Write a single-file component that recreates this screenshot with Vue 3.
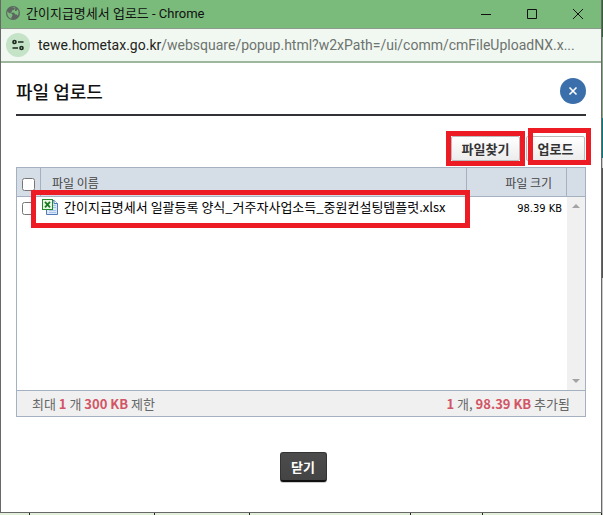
<template>
  <div class="desktop">
    <main class="window">
      <header class="titlebar">
        <svg class="globe" viewBox="0 0 14 14" aria-hidden="true">
          <circle cx="7" cy="7" r="7" fill="#5d6661" />
          <path d="M1.2 5.4 3.4 7.2H5.2L6.4 8.6V10L5.4 11.2V12.8C3 12 1.2 9.8 1.2 7ZM5.4 1.4 8.8 1.3V2.8L7.4 4.2H6V5.8H4.6V6.6L8.2 6.8 9.2 8.4H10.8L11.6 9.8C13.1 7.8 12.9 5 11.6 3.3L10.4 5H9V3.8L9.4 2" fill="#7abb7b" />
        </svg>
        <span class="window-title">간이지급명세서 업로드 - Chrome</span>
        <div class="window-controls">
          <button type="button" aria-label="최소화">
            <svg viewBox="0 0 12 12"><path d="M1 6.5H11" /></svg>
          </button>
          <button type="button" aria-label="최대화">
            <svg viewBox="0 0 12 12"><path d="M1.5 1.5H10.5V10.5H1.5Z" /></svg>
          </button>
          <button type="button" aria-label="창 닫기">
            <svg viewBox="0 0 12 12"><path d="M1 1 11 11M11 1 1 11" /></svg>
          </button>
        </div>
      </header>

      <div class="addressbar">
        <button type="button" class="site-info" aria-label="사이트 정보">
          <svg viewBox="0 0 14 14">
            <circle cx="3.5" cy="4" r="1.5" />
            <path d="M7 4H12.5M1.5 10H7" />
            <circle cx="10.5" cy="10" r="1.5" />
          </svg>
        </button>
        <div class="url"><span class="host">tewe.hometax.go.kr</span>/websquare/popup.html?w2xPath=/ui/comm/cmFileUploadNX.x...</div>
      </div>

      <section class="popup">
        <div class="popup-head">
          <h1>파일 업로드</h1>
          <button type="button" class="popup-close" aria-label="닫기">
            <svg viewBox="0 0 10 10"><path d="M1.5 1.5 8.5 8.5M8.5 1.5 1.5 8.5" /></svg>
          </button>
        </div>

        <div class="actions">
          <button type="button" class="action marked find">파일찾기</button>
          <button type="button" class="action marked upload">업로드</button>
        </div>

        <div class="uploader">
          <table>
            <thead>
              <tr>
                <th class="col-check"><input v-model="allChecked" type="checkbox" aria-label="전체 선택" /></th>
                <th class="col-name">파일 이름</th>
                <th class="col-size">파일 크기</th>
                <th class="col-scroll"></th>
              </tr>
            </thead>
            <tbody>
              <tr v-for="file in files" :key="file.name" class="file-row">
                <td class="col-check"><input v-model="file.checked" type="checkbox" :aria-label="file.name" /></td>
                <td class="col-name">
                  <div class="file-name marked">
                    <svg class="excel" viewBox="0 0 16 16" aria-hidden="true">
                      <path d="M4.5 1.5H12L15.5 4.5V15.5H4.5Z" fill="#dce9fb" stroke="#5279b8" />
                      <path d="M12 1.5V4.5H15.5" fill="#fff" stroke="#5279b8" />
                      <path d="M10 6.5H14M10 8.5H14M7 11.5H14M7 13.5H14" stroke="#a9c2e8" />
                      <rect x="0.5" y="0.5" width="10" height="10" fill="#e9f6e3" stroke="#238a2b" />
                      <path d="M3 2.8 8 8.4M8 2.8 3 8.4" stroke="#187b20" stroke-width="1.8" />
                    </svg>
                    <span>{{ file.name }}</span>
                  </div>
                </td>
                <td class="col-size">{{ file.size }}</td>
                <td class="col-scroll" rowspan="2">
                  <div class="scrollbar">
                    <svg viewBox="0 0 8 4"><path d="M4 0 8 4H0Z" /></svg>
                    <svg viewBox="0 0 8 4"><path d="M0 0H8L4 4Z" /></svg>
                  </div>
                </td>
              </tr>
              <tr class="blank">
                <td colspan="3"></td>
              </tr>
            </tbody>
          </table>
          <div class="summary">
            <span>최대 <b>1</b> 개 <b>300 KB</b> 제한</span>
            <span><b>{{ files.length }}</b> 개, <b>98.39 KB</b> 추가됨</span>
          </div>
        </div>

        <div class="popup-foot">
          <button type="button" class="close-btn">닫기</button>
        </div>
      </section>
    </main>
    <div class="sheet-cells"><i></i><i></i><i></i><i></i><i></i><i></i></div>
  </div>
</template>

<script setup>
import { computed, ref } from 'vue'

const files = ref([
  {
    name: '간이지급명세서 일괄등록 양식_거주자사업소득_중원컨설팅템플럿.xlsx',
    size: '98.39 KB',
    checked: false
  }
])

const allChecked = computed({
  get: () => files.value.every((file) => file.checked),
  set: (value) => files.value.forEach((file) => { file.checked = value })
})
</script>

<style>
body {
  background: #e2efda;
}
</style>

<style scoped>
* {
  box-sizing: border-box;
}

.desktop {
  padding-right: 1px;
  background: linear-gradient(#355f3b 37px, #8aa38b 37px 118px, #087a80 118px 158px, #c8c8c8 158px 168px, #555 168px 278px, #c8c8c8 278px);
  font-family: 'Noto Sans CJK KR', sans-serif;
}

button {
  padding: 0;
  border: 0;
  background: none;
  font-family: inherit;
  cursor: pointer;
}

svg {
  display: block;
  fill: none;
}

.window {
  border: 1px solid #686868;
  border-top: 0;
  background: #fff;
}

.titlebar {
  display: flex;
  align-items: center;
  height: 29px;
  padding-left: 5px;
  border-bottom: 1px solid #8a9b8b;
  background: #7abb7b;
}

.globe {
  width: 14px;
  height: 14px;
  margin-right: 6px;
  margin-bottom: 3px;
}

.window-title {
  font-family: Roboto, 'Noto Sans CJK KR', sans-serif;
  font-size: 13px;
  line-height: 20px;
  color: #111;
}

.window-controls {
  display: flex;
  margin-left: auto;
}

.window-controls button {
  display: grid;
  place-items: center;
  width: 46px;
  height: 26px;
}

.window-controls svg {
  width: 12px;
  height: 12px;
  stroke: #111;
}

.addressbar {
  display: flex;
  align-items: center;
  height: 34px;
  padding: 0 5px;
  border-bottom: 2px solid #9db89e;
  background: #f1f8f2;
}

.site-info {
  display: grid;
  flex: none;
  place-items: center;
  width: 24px;
  height: 24px;
  margin-right: 8px;
  border-radius: 50%;
  background: #c5e3c7;
}

.site-info svg {
  width: 14px;
  height: 14px;
  stroke: #1f2d20;
  stroke-width: 1.7;
}

.url {
  font-family: Roboto, sans-serif;
  font-size: 14px;
  line-height: 24px;
  white-space: nowrap;
  color: #6d736e;
}

.host {
  color: #1f2420;
}

.popup {
  padding: 0 15px 30px;
}

.popup-head {
  display: flex;
  align-items: center;
  justify-content: space-between;
  height: 53px;
  padding-top: 4px;
  border-bottom: 2px solid #333236;
}

h1 {
  margin: 0;
  font-size: 18px;
  font-weight: 500;
  line-height: 24px;
  color: #111;
}

.popup-close {
  display: grid;
  place-items: center;
  width: 26px;
  height: 26px;
  border-radius: 50%;
  background: #3b6fab;
}

.popup-close svg {
  width: 10px;
  height: 10px;
  stroke: #fff;
  stroke-width: 1.6;
}

.actions {
  display: flex;
  justify-content: flex-end;
  gap: 6px;
  padding: 20px 1px 6px;
}

.action {
  height: 25px;
  border: 1px solid #bbb;
  border-radius: 2px;
  background: linear-gradient(#fff, #ececec);
  font-size: 13px;
  font-weight: 700;
  line-height: 21px;
  color: #333;
}

.find {
  width: 69px;
}

.upload {
  width: 59px;
}

/* red highlight frames drawn over the controls */
.marked {
  position: relative;
}

.marked::after {
  content: '';
  position: absolute;
  border: 5px solid #ed1c24;
  pointer-events: none;
}

.find::after {
  inset: -6px;
}

.upload::after {
  inset: -9px -7px -5px 1px;
}

.uploader {
  border: 1px solid #a5b1c1;
}

table {
  width: 100%;
  border-collapse: separate;
  border-spacing: 0;
  table-layout: fixed;
  font-size: 12px;
  color: #000;
}

th,
td {
  padding: 0;
}

th {
  height: 29px;
  border-right: 1px solid #a5b1c1;
  border-bottom: 1px solid #a5b1c1;
  background: #d5dde6;
  font-weight: 400;
  color: #444;
}

th:last-child {
  border-right: 0;
}

.col-check {
  width: 24px;
  text-align: left;
  vertical-align: bottom;
}

.col-check input {
  display: block;
  width: 13px;
  height: 13px;
  margin: 0 0 5px 5px;
}

th.col-name {
  padding-left: 11px;
  text-align: left;
}

.col-size {
  width: 100px;
  padding-right: 14px;
  text-align: right;
}

td.col-size {
  padding-right: 5px;
  font-family: 'DejaVu Sans Condensed', 'DejaVu Sans', sans-serif;
  font-size: 11px;
}

.col-scroll {
  width: 18px;
}

td.col-scroll {
  height: 193px;
}

.file-row td {
  height: 23px;
}

.file-name {
  display: flex;
  align-items: center;
  gap: 6px;
  width: max-content;
  padding-left: 1px;
  font-size: 13px;
  line-height: 20px;
  white-space: nowrap;
}

.file-name::after {
  inset: -7px -24px -11px -10px;
}

td.col-name {
  vertical-align: top;
}

.excel {
  width: 16px;
  height: 16px;
}

.blank td {
  height: 170px;
}

.scrollbar {
  display: flex;
  flex-direction: column;
  align-items: center;
  justify-content: space-between;
  height: 193px;
  padding: 7px 0;
  background: #f0f0f0;
}

.scrollbar svg {
  width: 8px;
  height: 4px;
  fill: #a3a3a3;
}

.summary {
  display: flex;
  justify-content: space-between;
  padding: 0 15px;
  border-top: 1px solid #a5b1c1;
  background: #f0f0f0;
  font-size: 13px;
  line-height: 25px;
  color: #666;
}

.summary b {
  font-weight: 700;
  color: #d25565;
}

.popup-foot {
  display: flex;
  justify-content: center;
  padding: 35px 0 0 4px;
}

.close-btn {
  width: 47px;
  height: 30px;
  border: 1px solid #333;
  border-bottom: 2px solid #111;
  border-radius: 3px;
  background: linear-gradient(#4c4c4c, #444);
  box-shadow: 0 1px #ccc;
  font-size: 13px;
  font-weight: 700;
  line-height: 24px;
  color: #fff;
}

.sheet-cells {
  display: grid;
  grid-template-columns: 5fr 21fr 16fr 27fr 12fr 20fr;
  height: 2px;
  background: #e2efda;
}

.sheet-cells i {
  border-right: 1px solid #222;
}
</style>
